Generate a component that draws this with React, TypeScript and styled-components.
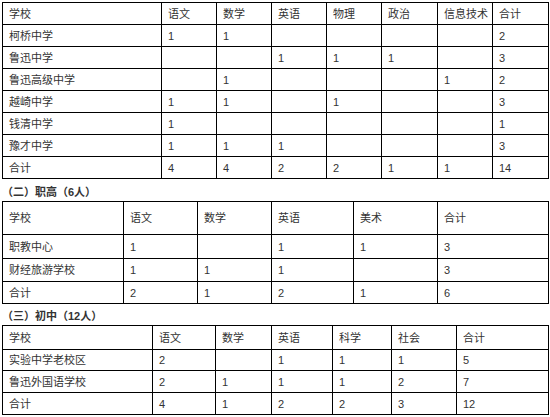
import styled, { createGlobalStyle } from 'styled-components';

const GlobalStyle = createGlobalStyle`
  body {
    margin: 0;
    background: #fff;
    font-family: "Liberation Sans", "Noto Sans CJK SC", sans-serif;
    font-size: 11px;
    color: #333;
  }
`;

interface TableData {
  cols: number[];
  head: string[];
  rows: string[][];
  headHeight: number;
  rowHeights: number[];
}

const Page = styled.div`
  padding: 2px;
  width: 546px;
`;

const Table = styled.table`
  width: 546px;
  border-collapse: collapse;
  table-layout: fixed;
`;

const Cell = styled.td`
  border: 1px solid #000;
  padding: 0 6px;
  vertical-align: middle;
  white-space: nowrap;
  line-height: 14px;
`;

const Row = styled.tr<{ $h: number }>`
  height: ${(p) => p.$h}px;
`;

const Heading = styled.div<{ $h: number }>`
  height: ${(p) => p.$h}px;
  display: flex;
  align-items: center;
  font-weight: bold;
  color: #333;
  padding-top: 1px;
  box-sizing: border-box;
`;

const tables: TableData[] = [
  {
    cols: [159, 55, 55, 55, 55, 56, 55, 56],
    head: ['学校', '语文', '数学', '英语', '物理', '政治', '信息技术', '合计'],
    rows: [
      ['柯桥中学', '1', '1', '', '', '', '', '2'],
      ['鲁迅中学', '', '', '1', '1', '1', '', '3'],
      ['鲁迅高级中学', '', '1', '', '', '', '1', '2'],
      ['越崎中学', '1', '1', '', '1', '', '', '3'],
      ['钱清中学', '1', '', '', '', '', '', '1'],
      ['豫才中学', '1', '1', '1', '', '', '', '3'],
      ['合计', '4', '4', '2', '2', '1', '1', '14'],
    ],
    headHeight: 22,
    rowHeights: [22, 22, 22, 22, 22, 22, 22],
  },
  {
    cols: [121, 74, 74, 82, 84, 111],
    head: ['学校', '语文', '数学', '英语', '美术', '合计'],
    rows: [
      ['职教中心', '1', '', '1', '1', '3'],
      ['财经旅游学校', '1', '1', '1', '', '3'],
      ['合计', '2', '1', '2', '1', '6'],
    ],
    headHeight: 33,
    rowHeights: [24, 23, 22],
  },
  {
    cols: [150, 63, 56, 61, 59, 65, 92],
    head: ['学校', '语文', '数学', '英语', '科学', '社会', '合计'],
    rows: [
      ['实验中学老校区', '2', '', '1', '1', '1', '5'],
      ['鲁迅外国语学校', '2', '1', '1', '1', '2', '7'],
      ['合计', '4', '1', '2', '2', '3', '12'],
    ],
    headHeight: 24,
    rowHeights: [21, 22, 22],
  },
];

const headings = ['', '（二）职高（6人）', '（三）初中（12人）'];
const headingHeights = [0, 22, 21];

const DataTable = ({ data }: { data: TableData }) => (
  <Table>
    <colgroup>
      {data.cols.map((w, i) => (
        <col key={i} style={{ width: w }} />
      ))}
    </colgroup>
    <tbody>
      <Row $h={data.headHeight}>
        {data.head.map((h, i) => (
          <Cell key={i}>{h}</Cell>
        ))}
      </Row>
      {data.rows.map((r, ri) => (
        <Row key={ri} $h={data.rowHeights[ri]}>
          {r.map((c, ci) => (
            <Cell key={ci}>{c}</Cell>
          ))}
        </Row>
      ))}
    </tbody>
  </Table>
);

export default function App() {
  return (
    <>
      <GlobalStyle />
      <Page>
        {tables.map((t, i) => (
          <div key={i}>
            {headings[i] && <Heading $h={headingHeights[i]}>{headings[i]}</Heading>}
            <DataTable data={t} />
          </div>
        ))}
      </Page>
    </>
  );
}
